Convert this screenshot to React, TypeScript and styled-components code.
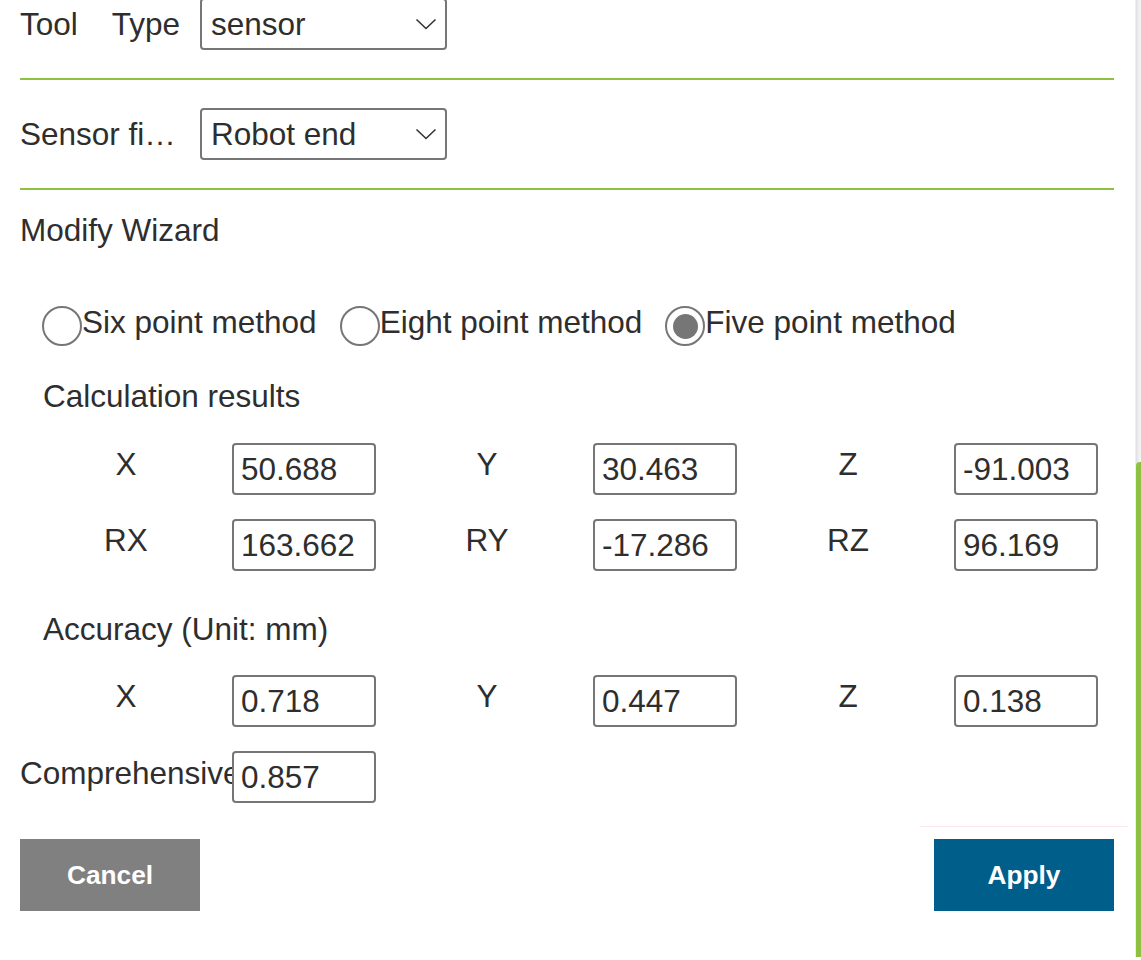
import React from "react";
import styled, { createGlobalStyle } from "styled-components";

const GlobalStyle = createGlobalStyle`
  html, body {
    margin: 0;
    padding: 0;
    background: #ffffff;
    overflow: hidden;
  }
  body {
    font-family: "Liberation Sans", Arial, sans-serif;
    color: #2e2e2e;
    font-size: 31.5px;
    line-height: 36px;
  }
  * { box-sizing: border-box; }
`;

const Page = styled.div`
  display: flex;
  width: 1141px;
  height: 960px;
  overflow: hidden;
`;

const Content = styled.div`
  flex: 1;
  padding: 0 21px 0 20px;
  margin-top: -2px;
  display: flex;
  flex-direction: column;
`;

const ScrollTrack = styled.div`
  flex: none;
  width: 6px;
  height: 957px;
  display: flex;
  flex-direction: column;
  background: linear-gradient(to right, #ffffff 0, #dedede 1px, #ececec 3px, #f6f6f6 6px);
`;

const ScrollThumb = styled.div`
  margin-top: 462px;
  margin-left: 1px;
  flex: 1;
  background: #8dc13f;
  border-top-left-radius: 4px;
`;

const FieldRow = styled.div<{ $first?: boolean }>`
  display: flex;
  align-items: center;
  padding: ${(p) => (p.$first ? 0 : 28)}px 0 28px;
  border-bottom: 2px solid #8dc13f;
`;

const FieldLabel = styled.div<{ $justify?: boolean }>`
  width: 160px;
  margin-right: 20px;
  white-space: nowrap;
  overflow: hidden;
  text-overflow: ${(p) => (p.$justify ? "clip" : "ellipsis")};
  text-align: ${(p) => (p.$justify ? "justify" : "left")};
  text-align-last: ${(p) => (p.$justify ? "justify" : "auto")};
`;

const SelectBox = styled.div`
  width: 247px;
  height: 52px;
  border: 2px solid #767676;
  border-radius: 4px;
  display: flex;
  align-items: center;
  justify-content: space-between;
  padding: 0 8px 0 9px;
  background: #ffffff;
`;

const SectionTitle = styled.div`
  padding-top: 22px;
`;

const RadioGroup = styled.div`
  display: flex;
  align-items: flex-start;
  gap: 23px;
  margin-top: 56px;
  padding-left: 22px;
`;

const RadioItem = styled.label`
  display: flex;
  align-items: flex-start;
  white-space: nowrap;
`;

const RadioCircle = styled.span<{ $checked?: boolean }>`
  width: 40px;
  height: 40px;
  margin-top: 2px;
  border: 2px solid #767676;
  border-radius: 50%;
  display: flex;
  align-items: center;
  justify-content: center;
  flex: none;
  &::after {
    content: "";
    display: ${(p) => (p.$checked ? "block" : "none")};
    width: 25px;
    height: 25px;
    border-radius: 50%;
    background: #767676;
  }
`;

const SubTitle = styled.div<{ $top: number }>`
  padding-left: 23px;
  margin-top: ${(p) => p.$top}px;
`;

const ValueRow = styled.div<{ $top: number }>`
  display: flex;
  gap: 5px;
  margin-top: ${(p) => p.$top}px;
`;

const ValueGroup = styled.div`
  display: grid;
  grid-template-columns: 212px 144px;
  align-items: start;
`;

const ValueLabel = styled.div<{ $left?: boolean; $pad?: number }>`
  text-align: ${(p) => (p.$left ? "left" : "center")};
  padding-top: ${(p) => p.$pad ?? 3}px;
  white-space: nowrap;
  overflow: visible;
`;

const ValueInput = styled.input`
  width: 144px;
  height: 52px;
  border: 2px solid #767676;
  border-radius: 4px;
  padding: 0 7px;
  font-family: "Liberation Sans", Arial, sans-serif;
  font-size: 31.5px;
  color: #2e2e2e;
  background: #ffffff;
  position: relative;
  outline: none;
`;

const Footer = styled.div`
  display: flex;
  justify-content: space-between;
  align-items: flex-end;
  margin-top: 23px;
`;

const ApplyArea = styled.div`
  border-top: 1px solid #fce6ee;
  padding: 12px 14px 0;
  margin-right: -14px;
`;

const Button = styled.button<{ $primary?: boolean }>`
  width: 180px;
  height: 72px;
  border: none;
  border-radius: 0;
  background: ${(p) => (p.$primary ? "#005e8a" : "#808080")};
  color: #ffffff;
  font-family: "Liberation Sans", Arial, sans-serif;
  font-weight: bold;
  font-size: 26.25px;
  cursor: pointer;
`;

const Chevron = () => (
  <svg width="22" height="12" viewBox="0 0 22 12" fill="none">
    <path d="M1.5 1.5 L11 10.5 L20.5 1.5" stroke="#333" strokeWidth="1.6" />
  </svg>
);

type Pair = { label: string; value: string };

const Row = ({ items, top }: { items: Pair[]; top: number }) => (
  <ValueRow $top={top}>
    {items.map((it) => (
      <ValueGroup key={it.label}>
        <ValueLabel>{it.label}</ValueLabel>
        <ValueInput readOnly value={it.value} />
      </ValueGroup>
    ))}
  </ValueRow>
);

export default function App() {
  return (
    <>
      <GlobalStyle />
      <Page>
        <Content>
          <FieldRow $first>
            <FieldLabel $justify>Tool Type</FieldLabel>
            <SelectBox>
              <span>sensor</span>
              <Chevron />
            </SelectBox>
          </FieldRow>
          <FieldRow>
            <FieldLabel>Sensor fixed position</FieldLabel>
            <SelectBox>
              <span>Robot end</span>
              <Chevron />
            </SelectBox>
          </FieldRow>
          <SectionTitle>Modify Wizard</SectionTitle>
          <RadioGroup>
            <RadioItem>
              <RadioCircle />
              Six point method
            </RadioItem>
            <RadioItem>
              <RadioCircle />
              Eight point method
            </RadioItem>
            <RadioItem>
              <RadioCircle $checked />
              Five point method
            </RadioItem>
          </RadioGroup>
          <SubTitle $top={32}>Calculation results</SubTitle>
          <Row
            top={29}
            items={[
              { label: "X", value: "50.688" },
              { label: "Y", value: "30.463" },
              { label: "Z", value: "-91.003" },
            ]}
          />
          <Row
            top={24}
            items={[
              { label: "RX", value: "163.662" },
              { label: "RY", value: "-17.286" },
              { label: "RZ", value: "96.169" },
            ]}
          />
          <SubTitle $top={40}>Accuracy (Unit: mm)</SubTitle>
          <Row
            top={28}
            items={[
              { label: "X", value: "0.718" },
              { label: "Y", value: "0.447" },
              { label: "Z", value: "0.138" },
            ]}
          />
          <ValueRow $top={24}>
            <ValueGroup>
              <ValueLabel $left $pad={4}>Comprehensive</ValueLabel>
              <ValueInput readOnly value="0.857" />
            </ValueGroup>
          </ValueRow>
          <Footer>
            <Button>Cancel</Button>
            <ApplyArea>
              <Button $primary>Apply</Button>
            </ApplyArea>
          </Footer>
        </Content>
        <ScrollTrack>
          <ScrollThumb />
        </ScrollTrack>
      </Page>
    </>
  );
}
